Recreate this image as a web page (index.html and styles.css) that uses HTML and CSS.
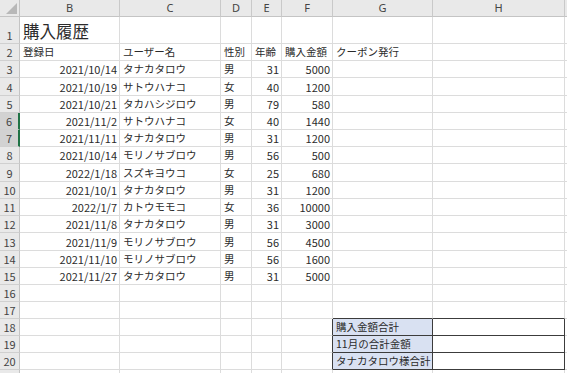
FILE: index.html
```html
<!DOCTYPE html>
<html lang="ja">
<head>
<meta charset="utf-8">
<link rel="stylesheet" href="styles.css">
</head>
<body>
<div class="sheet">
  <div class="corner"><span class="tri"></span></div>
  <div class="ch">B</div><div class="ch">C</div><div class="ch">D</div><div class="ch">E</div><div class="ch">F</div><div class="ch">G</div><div class="ch">H</div><div class="ch"></div>

  <div class="rh">1</div><div class="c title">購入履歴</div><div class="c"></div><div class="c"></div><div class="c"></div><div class="c"></div><div class="c"></div><div class="c"></div><div class="c"></div>

  <div class="rh">2</div><div class="c">登録日</div><div class="c">ユーザー名</div><div class="c">性別</div><div class="c">年齢</div><div class="c">購入金額</div><div class="c">クーポン発行</div><div class="c"></div><div class="c"></div>

  <div class="rh">3</div><div class="c r">2021/10/14</div><div class="c">タナカタロウ</div><div class="c">男</div><div class="c r">31</div><div class="c r">5000</div><div class="c"></div><div class="c"></div><div class="c"></div>
  <div class="rh">4</div><div class="c r">2021/10/19</div><div class="c">サトウハナコ</div><div class="c">女</div><div class="c r">40</div><div class="c r">1200</div><div class="c"></div><div class="c"></div><div class="c"></div>
  <div class="rh">5</div><div class="c r">2021/10/21</div><div class="c">タカハシジロウ</div><div class="c">男</div><div class="c r">79</div><div class="c r">580</div><div class="c"></div><div class="c"></div><div class="c"></div>
  <div class="rh sel">6</div><div class="c r">2021/11/2</div><div class="c">サトウハナコ</div><div class="c">女</div><div class="c r">40</div><div class="c r">1440</div><div class="c"></div><div class="c"></div><div class="c"></div>
  <div class="rh sel">7</div><div class="c r">2021/11/11</div><div class="c">タナカタロウ</div><div class="c">男</div><div class="c r">31</div><div class="c r">1200</div><div class="c"></div><div class="c"></div><div class="c"></div>
  <div class="rh">8</div><div class="c r">2021/10/14</div><div class="c">モリノサブロウ</div><div class="c">男</div><div class="c r">56</div><div class="c r">500</div><div class="c"></div><div class="c"></div><div class="c"></div>
  <div class="rh">9</div><div class="c r">2022/1/18</div><div class="c">スズキヨウコ</div><div class="c">女</div><div class="c r">25</div><div class="c r">680</div><div class="c"></div><div class="c"></div><div class="c"></div>
  <div class="rh">10</div><div class="c r">2021/10/1</div><div class="c">タナカタロウ</div><div class="c">男</div><div class="c r">31</div><div class="c r">1200</div><div class="c"></div><div class="c"></div><div class="c"></div>
  <div class="rh">11</div><div class="c r">2022/1/7</div><div class="c">カトウモモコ</div><div class="c">女</div><div class="c r">36</div><div class="c r">10000</div><div class="c"></div><div class="c"></div><div class="c"></div>
  <div class="rh">12</div><div class="c r">2021/11/8</div><div class="c">タナカタロウ</div><div class="c">男</div><div class="c r">31</div><div class="c r">3000</div><div class="c"></div><div class="c"></div><div class="c"></div>
  <div class="rh">13</div><div class="c r">2021/11/9</div><div class="c">モリノサブロウ</div><div class="c">男</div><div class="c r">56</div><div class="c r">4500</div><div class="c"></div><div class="c"></div><div class="c"></div>
  <div class="rh">14</div><div class="c r">2021/11/10</div><div class="c">モリノサブロウ</div><div class="c">男</div><div class="c r">56</div><div class="c r">1600</div><div class="c"></div><div class="c"></div><div class="c"></div>
  <div class="rh">15</div><div class="c r">2021/11/27</div><div class="c">タナカタロウ</div><div class="c">男</div><div class="c r">31</div><div class="c r">5000</div><div class="c"></div><div class="c"></div><div class="c"></div>
  <div class="rh">16</div><div class="c"></div><div class="c"></div><div class="c"></div><div class="c"></div><div class="c"></div><div class="c"></div><div class="c"></div><div class="c"></div>
  <div class="rh">17</div><div class="c"></div><div class="c"></div><div class="c"></div><div class="c"></div><div class="c"></div><div class="c box-top"></div><div class="c box-top"></div><div class="c"></div>
  <div class="rh">18</div><div class="c"></div><div class="c"></div><div class="c"></div><div class="c"></div><div class="c box-left"></div><div class="c box label">購入金額合計</div><div class="c box"></div><div class="c"></div>
  <div class="rh">19</div><div class="c"></div><div class="c"></div><div class="c"></div><div class="c"></div><div class="c box-left"></div><div class="c box label">11月の合計金額</div><div class="c box"></div><div class="c"></div>
  <div class="rh">20</div><div class="c"></div><div class="c"></div><div class="c"></div><div class="c"></div><div class="c box-left"></div><div class="c box label">タナカタロウ様合計</div><div class="c box"></div><div class="c"></div>
  <div class="rh"></div><div class="c"></div><div class="c"></div><div class="c"></div><div class="c"></div><div class="c"></div><div class="c"></div><div class="c"></div><div class="c"></div>
</div>
</body>
</html>
```

FILE: styles.css
```css
html, body {
  margin: 0;
  padding: 0;
  background: #ffffff;
  overflow: hidden;
}

.sheet {
  display: grid;
  grid-template-columns: 20px 100px 101px 31px 30px 51px 100px 132px 20px;
  grid-template-rows: 17px 27px 17px 17px 18px 17px 17px 17px 17px 18px 17px 17px 17px 18px 17px 17px 17px 17px 17px 17px 17px 17px;
  font-family: "Noto Sans CJK JP", "Noto Sans", sans-serif;
  font-size: 10.5px;
  color: #2b2b2b;
  width: 567px;
  height: 373px;
  overflow: hidden;
}

.corner {
  position: relative;
  background: #e9e9e9;
  border-right: 1px solid #c4c4c4;
  border-bottom: 1px solid #c4c4c4;
  box-sizing: border-box;
}

.tri {
  position: absolute;
  right: 2px;
  bottom: 2px;
  width: 0;
  height: 0;
  border-left: 11px solid transparent;
  border-bottom: 11px solid #b8b8b8;
}

.ch {
  background: #e9e9e9;
  border-right: 1px solid #c9c9c9;
  border-bottom: 1px solid #c4c4c4;
  box-sizing: border-box;
  display: flex;
  align-items: center;
  justify-content: center;
  color: #444444;
  font-family: "Noto Sans", "Noto Sans CJK JP", sans-serif;
  font-size: 11px;
  line-height: 16px;
}

.rh {
  background: #e9e9e9;
  border-right: 1px solid #c4c4c4;
  border-bottom: 1px solid #d0d0d0;
  box-sizing: border-box;
  display: flex;
  align-items: flex-end;
  justify-content: center;
  color: #444444;
  font-size: 11px;
  line-height: 15px;
}

.rh.sel {
  background: #d2d2d2;
  border-right: 2px solid #217346;
}

.c {
  border-right: 1px solid #dcdcdc;
  border-bottom: 1px solid #dcdcdc;
  box-sizing: border-box;
  display: flex;
  align-items: flex-end;
  justify-content: flex-start;
  padding: 0 2px 0 3px;
  white-space: nowrap;
  line-height: 16px;
  overflow: visible;
  min-width: 0;
}

.c.r {
  justify-content: flex-end;
  font-size: 11px;
}

.c.title {
  font-size: 16.5px;
  line-height: 24px;
  padding-left: 3px;
}

.c.box {
  border-right: 1px solid #3c3c3c;
  border-bottom: 1px solid #3c3c3c;
}

.c.box-top {
  border-bottom: 1px solid #3c3c3c;
}

.c.box-left {
  border-right: 1px solid #3c3c3c;
}

.c.label {
  background: #d9e1f2;
  overflow: hidden;
}
```
